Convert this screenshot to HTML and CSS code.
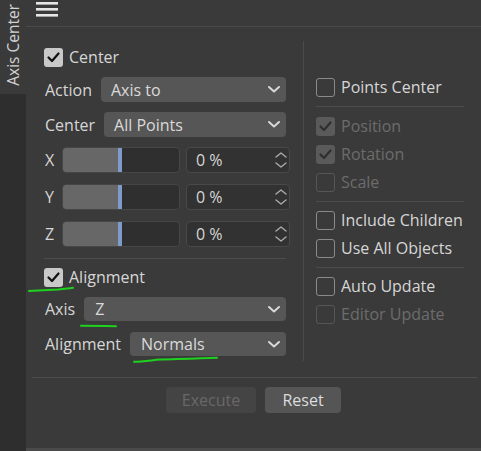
FILE: index.html
```html
<!DOCTYPE html>
<html>
<head>
<meta charset="utf-8">
<link rel="stylesheet" href="styles.css">
</head>
<body>
<div class="app">
  <aside class="sidebar">
    <div class="tab"><span class="tab-label">Axis Center</span></div>
  </aside>
  <main class="main">
    <header class="toolbar">
      <svg class="menu-icon" width="22" height="16" viewBox="0 0 22 16">
        <rect x="0" y="1" width="22" height="2.6" fill="#e6e6e6"/>
        <rect x="0" y="7" width="22" height="2.6" fill="#e6e6e6"/>
        <rect x="0" y="13" width="22" height="2.6" fill="#e6e6e6"/>
      </svg>
    </header>
    <section class="content">
      <div class="cols">
        <div class="col-left">
          <label class="check-row">
            <span class="cb cb-on"><svg viewBox="0 0 19 19"><polyline points="4.5,9.5 8,13 14.5,5.5" /></svg></span>
            <span class="cb-text">Center</span>
          </label>
          <div class="field-row r-action">
            <span class="lbl">Action</span>
            <div class="dropdown"><span>Axis to</span><svg class="chev" viewBox="0 0 12 7"><polyline points="1,1 6,5.5 11,1"/></svg></div>
          </div>
          <div class="field-row r-center">
            <span class="lbl">Center</span>
            <div class="dropdown"><span>All Points</span><svg class="chev" viewBox="0 0 12 7"><polyline points="1,1 6,5.5 11,1"/></svg></div>
          </div>
          <div class="field-row r-x">
            <span class="lbl lbl-axis">X</span>
            <div class="slider"><div class="slider-fill"></div><div class="slider-knob"></div></div>
            <div class="num"><span>0 %</span><svg class="spin" viewBox="0 0 12 16"><polyline points="1,5 6,1 11,5"/><polyline points="1,11 6,15 11,11"/></svg></div>
          </div>
          <div class="field-row r-y">
            <span class="lbl lbl-axis">Y</span>
            <div class="slider"><div class="slider-fill"></div><div class="slider-knob"></div></div>
            <div class="num"><span>0 %</span><svg class="spin" viewBox="0 0 12 16"><polyline points="1,5 6,1 11,5"/><polyline points="1,11 6,15 11,11"/></svg></div>
          </div>
          <div class="field-row r-z">
            <span class="lbl lbl-axis">Z</span>
            <div class="slider"><div class="slider-fill"></div><div class="slider-knob"></div></div>
            <div class="num"><span>0 %</span><svg class="spin" viewBox="0 0 12 16"><polyline points="1,5 6,1 11,5"/><polyline points="1,11 6,15 11,11"/></svg></div>
          </div>
          <div class="sep sep-left"></div>
          <label class="check-row r-align">
            <span class="cb cb-on"><svg viewBox="0 0 19 19"><polyline points="4.5,9.5 8,13 14.5,5.5" /></svg></span>
            <span class="cb-text">Alignment</span>
          </label>
          <div class="field-row r-axis">
            <span class="lbl">Axis</span>
            <div class="dropdown"><span>Z</span><svg class="chev" viewBox="0 0 12 7"><polyline points="1,1 6,5.5 11,1"/></svg></div>
          </div>
          <div class="field-row r-alignment">
            <span class="lbl">Alignment</span>
            <div class="dropdown"><span>Normals</span><svg class="chev" viewBox="0 0 12 7"><polyline points="1,1 6,5.5 11,1"/></svg></div>
          </div>
        </div>
        <div class="col-right">
          <label class="check-row"><span class="cb cb-off"></span><span class="cb-text">Points Center</span></label>
          <div class="sep sep-right sep-first"></div>
          <label class="check-row disabled"><span class="cb cb-dis-on"><svg viewBox="0 0 19 19"><polyline points="4.5,9.5 8,13 14.5,5.5" /></svg></span><span class="cb-text">Position</span></label>
          <label class="check-row disabled"><span class="cb cb-dis-on"><svg viewBox="0 0 19 19"><polyline points="4.5,9.5 8,13 14.5,5.5" /></svg></span><span class="cb-text">Rotation</span></label>
          <label class="check-row disabled"><span class="cb cb-dis-off"></span><span class="cb-text">Scale</span></label>
          <div class="sep sep-right"></div>
          <label class="check-row"><span class="cb cb-off"></span><span class="cb-text">Include Children</span></label>
          <label class="check-row"><span class="cb cb-off"></span><span class="cb-text">Use All Objects</span></label>
          <div class="sep sep-right"></div>
          <label class="check-row"><span class="cb cb-off"></span><span class="cb-text">Auto Update</span></label>
          <label class="check-row disabled"><span class="cb cb-dis-off"></span><span class="cb-text">Editor Update</span></label>
        </div>
      </div>
      <div class="rule"></div>
      <div class="actions">
        <button class="btn btn-disabled">Execute</button>
        <button class="btn">Reset</button>
      </div>
    </section>
    <footer class="strip"></footer>
  </main>
</div>
<svg class="annotations" width="481" height="451" viewBox="0 0 481 451">
  <path d="M29,291 C40,290.5 50,290 58,289.5 C64,289 69,288.5 73,287.8" />
  <path d="M81,325.8 C92,325.8 104,326 116,326.2" />
  <path d="M134,361.8 C142,361.5 150,360.5 160,359.6 C180,359 200,358.6 217,357.8" />
</svg>
</body>
</html>
```

FILE: styles.css
```css
* { box-sizing: border-box; }
html, body {
  margin: 0;
  padding: 0;
  width: 481px;
  height: 451px;
  overflow: hidden;
  background: #3a3a3a;
  font-family: "Open Sans", "Noto Sans", sans-serif;
  font-size: 16px;
  color: #d6d6d6;
}
.app {
  display: flex;
  width: 481px;
  height: 451px;
}
.sidebar {
  width: 26px;
  flex: none;
  background: #2e2e2e;
}
.tab {
  height: 94px;
  background: #3a3a3a;
  display: flex;
  justify-content: center;
  align-items: flex-end;
}
.tab-label {
  writing-mode: vertical-rl;
  transform: rotate(180deg);
  font-size: 15.5px;
  line-height: 22px;
  white-space: nowrap;
  color: #d2d2d2;
  margin-bottom: 8px;
}
.main {
  flex: 1;
  display: flex;
  flex-direction: column;
  background: #3a3a3a;
}
.toolbar {
  height: 27px;
  border-bottom: 1px solid #4a4a4a;
  padding: 1px 0 0 10px;
}
.menu-icon { display: block; }
.content {
  display: flex;
  flex-direction: column;
}
.cols {
  display: flex;
  margin-top: 14px;
}
.col-left {
  width: 278px;
  padding: 7px 17px 5px 18px;
  border-right: 1px solid #4a4a4a;
  display: flex;
  flex-direction: column;
}
.col-right {
  width: 172px;
  padding: 37px 12px 0 12px;
  display: flex;
  flex-direction: column;
  gap: 9px;
}
.check-row {
  display: flex;
  align-items: center;
  height: 19px;
  gap: 6px;
  white-space: nowrap;
}
.cb-text { line-height: 19px; color: #d6d6d6; }
.disabled .cb-text { color: #6c6c6c; }
.cb {
  width: 19px;
  height: 19px;
  border-radius: 3px;
  flex: none;
  display: block;
}
.cb svg { display: block; width: 19px; height: 19px; }
.cb polyline { fill: none; stroke-width: 2.2; stroke-linecap: round; stroke-linejoin: round; }
.cb-on { background: #c9c9c9; }
.cb-on polyline { stroke: #111; }
.cb-off { border: 1.5px solid #8a8a8a; }
.cb-dis-on { background: #5a5a5a; }
.cb-dis-on polyline { stroke: #2f2f2f; }
.cb-dis-off { border: 1.5px solid #565656; }
.field-row {
  display: flex;
  align-items: center;
  gap: 9px;
  margin-top: 10px;
}
.lbl { white-space: nowrap; color: #d6d6d6; line-height: 20px; padding-left: 1px; }
.lbl-axis { width: 12px; }
.dropdown {
  flex: 1;
  height: 25px;
  background: #565656;
  border-radius: 4px;
  display: flex;
  align-items: center;
  justify-content: space-between;
  padding: 0 6px 0 10px;
  color: #dadada;
  line-height: 20px;
}
.chev { width: 12px; height: 7px; }
.chev polyline { fill: none; stroke: #d8d8d8; stroke-width: 2; stroke-linecap: round; stroke-linejoin: round; }
.r-axis .dropdown, .r-alignment .dropdown { height: 24px; padding-left: 11px; }
.r-axis { margin-top: 10px; }
.r-alignment { margin-top: 11px; }
.r-x { margin-top: 10px; gap: 6px; }
.r-y, .r-z { margin-top: 11px; gap: 6px; }
.slider {
  width: 118px;
  height: 26px;
  border: 1px solid #464646;
  border-radius: 4px;
  background: #2f2f2f;
  position: relative;
  overflow: hidden;
  flex: none;
}
.slider-fill {
  position: absolute;
  left: 0; top: 0; bottom: 0;
  width: 55px;
  background: #676767;
}
.slider-knob {
  position: absolute;
  left: 55px; top: 0; bottom: 0;
  width: 4px;
  background: #7f9bcb;
}
.num {
  width: 104px;
  height: 26px;
  margin-left: 0;
  margin-right: -4px;
  border: 1px solid #494949;
  border-radius: 4px;
  background: #323232;
  display: flex;
  align-items: center;
  justify-content: space-between;
  padding: 0 2px 0 9px;
  flex: none;
  line-height: 20px;
}
.spin { width: 12px; height: 16px; }
.spin polyline { fill: none; stroke: #ababab; stroke-width: 1.4; stroke-linecap: round; stroke-linejoin: round; }
.sep { height: 1px; background: #4d4d4d; flex: none; }
.sep-left { margin-top: 11px; }
.r-align { margin-top: 9px; }
.sep-first { margin-bottom: 1px; }
.rule {
  height: 1px;
  background: #4d4d4d;
  margin: 16px 4px 0 6px;
}
.actions {
  display: flex;
  justify-content: center;
  gap: 9px;
  margin-top: 9px;
}
.btn {
  height: 26px;
  border: none;
  border-radius: 4px;
  font-family: inherit;
  font-size: 16px;
  background: #555555;
  color: #dcdcdc;
  padding: 0;
  width: 76px;
}
.btn-disabled {
  width: 90px;
  background: #444444;
  color: #686868;
}
.strip {
  margin-top: auto;
  height: 3px;
  background: #4a4a4a;
}
.annotations {
  position: absolute;
  left: 0;
  top: 0;
  pointer-events: none;
}
.annotations path {
  fill: none;
  stroke: #1fd11f;
  stroke-width: 2;
  stroke-linecap: round;
}
```
